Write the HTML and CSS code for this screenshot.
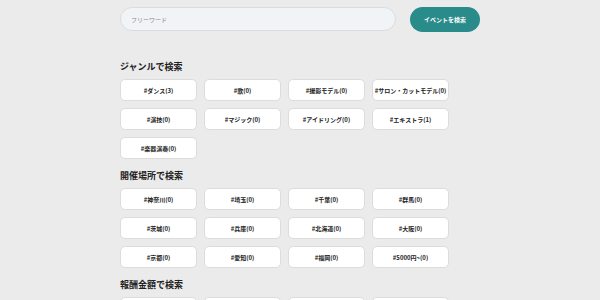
FILE: index.html
```html
<!DOCTYPE html>
<html>
<head>
    <link rel="stylesheet" href="styles.css">
</head>
<body>
    <div class="container">
        <div class="search-bar">
            <input class="keyword" type="text" placeholder="フリーワード">
            <button class="search-btn">イベントを検索</button>
        </div>

        <div class="section first">
            <h2 class="section-title">ジャンルで検索</h2>
            <div class="tag-grid">
                <span class="tag">#ダンス(3)</span>
                <span class="tag">#歌(0)</span>
                <span class="tag">#撮影モデル(0)</span>
                <span class="tag">#サロン・カットモデル(0)</span>
                <span class="tag">#演技(0)</span>
                <span class="tag">#マジック(0)</span>
                <span class="tag">#アイドリング(0)</span>
                <span class="tag">#エキストラ(1)</span>
                <span class="tag">#楽器演奏(0)</span>
            </div>
        </div>

        <div class="section">
            <h2 class="section-title">開催場所で検索</h2>
            <div class="tag-grid">
                <span class="tag">#神奈川(0)</span>
                <span class="tag">#埼玉(0)</span>
                <span class="tag">#千葉(0)</span>
                <span class="tag">#群馬(0)</span>
                <span class="tag">#茨城(0)</span>
                <span class="tag">#兵庫(0)</span>
                <span class="tag">#北海道(0)</span>
                <span class="tag">#大阪(0)</span>
                <span class="tag">#京都(0)</span>
                <span class="tag">#愛知(0)</span>
                <span class="tag">#福岡(0)</span>
                <span class="tag">#5000円~(0)</span>
            </div>
        </div>

        <div class="section">
            <h2 class="section-title">報酬金額で検索</h2>
            <div class="tag-grid">
                <span class="tag"></span>
                <span class="tag"></span>
                <span class="tag"></span>
                <span class="tag"></span>
            </div>
        </div>
    </div>
</body>
</html>
```

FILE: styles.css
```css
:root {
    --bg: #ebebeb;
    --card: #ffffff;
    --line: #dcdcdc;
    --text: #222222;
    --muted: #8a8a8a;
    --teal: #2a8b8b;
}

* {
    box-sizing: border-box;
    font-family: "Noto Sans CJK JP", "Noto Sans", sans-serif;
}

body {
    margin: 0;
    background: var(--bg);
    color: var(--text);
}

.container {
    width: 360px;
    margin-left: 120px;
    padding-top: 7px;
}

.search-bar {
    display: flex;
    gap: 14px;
}

.keyword {
    flex: 1;
    height: 24px;
    padding: 0 10px;
    border: 1px solid var(--line);
    border-radius: 12px;
    background: #f1f4f6;
    font-size: 6px;
    outline: none;
}

.keyword::placeholder {
    color: var(--muted);
}

.search-btn {
    width: 70px;
    height: 25px;
    border: none;
    border-radius: 13px;
    background: var(--teal);
    color: #fff;
    font-size: 6px;
    font-weight: bold;
}

.section {
    margin-top: 11px;
}

.section.first {
    margin-top: 29px;
}

.section-title {
    margin: 0 0 6px;
    font-size: 9px;
    line-height: 12px;
    font-weight: bold;
}

.tag-grid {
    display: grid;
    grid-template-columns: repeat(4, 77px);
    gap: 7px;
}

.tag {
    display: flex;
    align-items: center;
    justify-content: center;
    height: 22px;
    background: var(--card);
    border: 1px solid var(--line);
    border-radius: 5px;
    font-size: 6px;
    font-weight: bold;
    color: var(--text);
    white-space: nowrap;
}
```
